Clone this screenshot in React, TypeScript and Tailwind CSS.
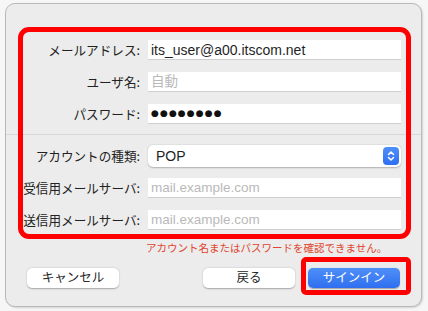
const font = { fontFamily: '"Liberation Sans", "Noto Sans CJK JP", sans-serif' };
const jp = { fontFamily: '"Noto Sans CJK JP", sans-serif' };

const Label: React.FC<{ children: React.ReactNode }> = ({ children }) => (
    <div className="w-[136px] text-right text-[12.6px] text-[#222] pr-[2px] leading-none whitespace-nowrap" style={jp}>
        {children}
    </div>
);

const Field: React.FC<{ label: string; value?: string; placeholder?: string; className?: string }> = ({
    label,
    value,
    placeholder,
    className = '',
}) => {
    return (
        <div className={`flex items-center h-5 ${className}`}>
            <Label>{label}</Label>
            <div className="ml-[6px] w-[253px] h-5 bg-white border-b border-[#cfcfcf] flex items-center pl-[3px]">
                {value ? (
                    <span className="text-[14px] text-[#1f1f1f] leading-none">{value}</span>
                ) : (
                    <span className="text-[13.5px] text-[#b9b9b9] leading-none">{placeholder}</span>
                )}
            </div>
        </div>
    );
};

const Button: React.FC<{ children: React.ReactNode; primary?: boolean }> = ({ children, primary }) => {
    return (
        <button
            className={`w-[92px] h-5 rounded-[5px] text-[12.5px] leading-none flex items-center justify-center ${
                primary
                    ? 'bg-gradient-to-b from-[#4f8ff8] to-[#2f6ff0] text-white shadow-[0_0.5px_1px_rgba(0,0,0,0.3)]'
                    : 'bg-white text-[#262626] shadow-[0_0.5px_1.5px_rgba(0,0,0,0.3)]'
            }`}
            style={jp}
        >
            {children}
        </button>
    );
};

export default function App() {
    return (
        <div className="relative w-[428px] h-[311px] bg-[#f6f6f6] overflow-hidden" style={font}>
            {/* window */}
            <div className="absolute left-[5px] top-[3px] w-[417px] h-[304px] rounded-[10px] bg-[#ececec] border border-[#b9b9b9] shadow-[1px_1px_2px_rgba(0,0,0,0.15)] flex flex-col">
                <div className="flex flex-col pt-[36px]">
                    <Field label="メールアドレス:" value="its_user@a00.itscom.net" />
                    <Field label="ユーザ名:" placeholder="自動" className="mt-[12px]" />
                    <div className="flex items-center h-5 mt-[12px]">
                        <Label>パスワード:</Label>
                        <div className="ml-[6px] w-[253px] h-5 bg-white border-b border-[#cfcfcf] flex items-center pl-[3px]">
                            <span className="text-[9px] leading-none tracking-[1.1px] text-[#111]" style={{ fontFamily: '"DejaVu Sans", sans-serif' }}>
                                ●●●●●●●●
                            </span>
                        </div>
                    </div>
                </div>

                <div className="mt-[10px] border-t border-[#d8d8d8]" />

                <div className="flex flex-col">
                    <div className="flex items-center h-[22px] mt-[10px]">
                        <Label>アカウントの種類:</Label>
                        <div className="ml-[6px] w-[253px] h-[22px] bg-white rounded-[5px] shadow-[0_0.5px_1.5px_rgba(0,0,0,0.25)] flex items-center pl-[8px] pr-[2px]">
                            <span className="text-[14px] text-[#1f1f1f] leading-none flex-1">POP</span>
                            <div className="w-[16px] h-[18px] rounded-[4px] bg-gradient-to-b from-[#4f8ff8] to-[#2f6ff0] flex items-center justify-center">
                                <svg width="10" height="14" viewBox="0 0 10 14" fill="none">
                                    <path d="M2.5 5.5 L5 3 L7.5 5.5" stroke="white" strokeWidth="1.5" strokeLinecap="round" strokeLinejoin="round" />
                                    <path d="M2.5 8.5 L5 11 L7.5 8.5" stroke="white" strokeWidth="1.5" strokeLinecap="round" strokeLinejoin="round" />
                                </svg>
                            </div>
                        </div>
                    </div>
                    <Field label="受信用メールサーバ:" placeholder="mail.example.com" className="mt-[11px]" />
                    <Field label="送信用メールサーバ:" placeholder="mail.example.com" className="mt-[12px]" />
                </div>

                <div className="mt-[13px] pl-[140px] text-[10.5px] leading-none text-[#e0452e]" style={jp}>
                    アカウント名またはパスワードを確認できません。
                </div>

                <div className="flex items-center mt-[14px] px-[21px]">
                    <Button>キャンセル</Button>
                    <div className="flex-1" />
                    <Button>戻る</Button>
                    <div className="w-[13px]" />
                    <Button primary>サインイン</Button>
                </div>
            </div>

            {/* red annotations */}
            <div className="absolute left-[18px] top-[27px] w-[393px] h-[212px] border-[5px] border-[#ff0000] rounded-[11px]" />
            <div className="absolute left-[301px] top-[257px] w-[110px] h-[38px] border-[5px] border-[#ff0000] rounded-[5px]" />
        </div>
    );
}
